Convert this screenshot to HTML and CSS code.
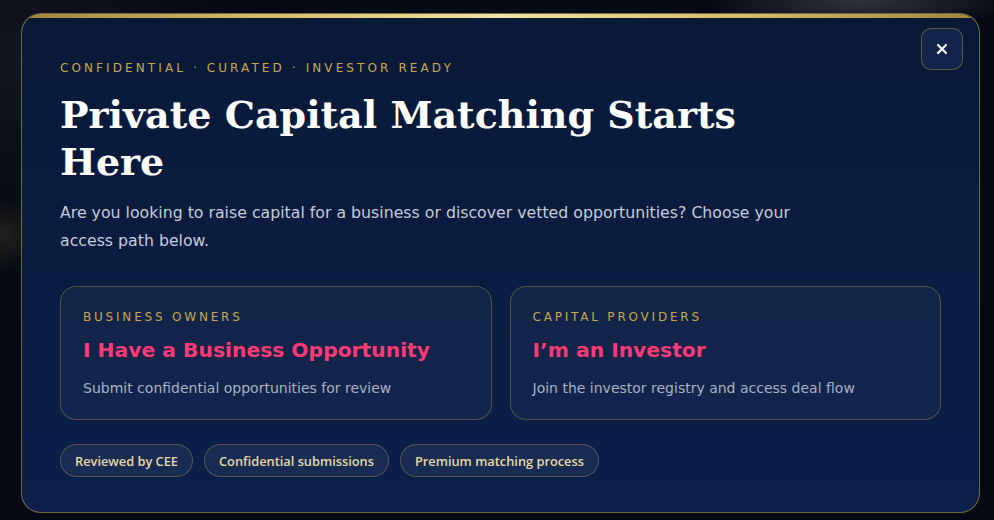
FILE: index.html
```html
<!DOCTYPE html>
<html lang="en">
<head>
<meta charset="utf-8">
<title>Private Capital Matching</title>
<link rel="stylesheet" href="styles.css">
</head>
<body>
<div class="backdrop">
  <div class="modal">
    <div class="modal-bar"></div>
    <button class="close" aria-label="Close">
      <svg width="12" height="12" viewBox="0 0 12 12"><path d="M2 2L10 10M10 2L2 10" stroke="#ffffff" stroke-width="2.2" stroke-linecap="round"/></svg>
    </button>
    <div class="modal-body">
      <p class="eyebrow">Confidential · Curated · Investor Ready</p>
      <h1 class="title">Private Capital Matching Starts Here</h1>
      <p class="lead">Are you looking to raise capital for a business or discover vetted opportunities? Choose your access path below.</p>
      <div class="cards">
        <a class="card" href="#">
          <span class="card-label">Business Owners</span>
          <span class="card-title">I Have a Business Opportunity</span>
          <span class="card-desc">Submit confidential opportunities for review</span>
        </a>
        <a class="card" href="#">
          <span class="card-label">Capital Providers</span>
          <span class="card-title">I’m an Investor</span>
          <span class="card-desc">Join the investor registry and access deal flow</span>
        </a>
      </div>
      <div class="pills">
        <span class="pill">Reviewed by CEE</span>
        <span class="pill">Confidential submissions</span>
        <span class="pill">Premium matching process</span>
      </div>
    </div>
  </div>
</div>
</body>
</html>
```

FILE: styles.css
```css
* { box-sizing: border-box; }
html, body { margin: 0; padding: 0; }
body {
  width: 994px;
  height: 520px;
  overflow: hidden;
  background: #050a14;
  font-family: "DejaVu Sans", "Open Sans", sans-serif;
}
.backdrop {
  width: 994px;
  height: 520px;
  padding: 13px 0 0 21px;
  background:
    radial-gradient(ellipse 220px 40px at 860px 2px, rgba(120,125,135,0.35), transparent 70%),
    radial-gradient(ellipse 60px 50px at 0px 235px, rgba(90,75,40,0.35), transparent 80%),
    radial-gradient(ellipse 300px 200px at 0px 60px, rgba(30,35,45,0.5), transparent 80%),
    #050a14;
}
.modal {
  position: relative;
  width: 959px;
  height: 500px;
  border: 1px solid rgba(201,169,74,0.55);
  border-radius: 20px;
  overflow: hidden;
  background: linear-gradient(180deg, #081936 0%, #0b1f4a 100%);
}
.modal-bar {
  height: 4px;
  background: linear-gradient(90deg, #a1843a 0%, #d9bc62 25%, #f3e2a2 50%, #d9bc62 75%, #a1843a 100%);
}
.close {
  position: absolute;
  top: 14px;
  right: 16px;
  width: 42px;
  height: 42px;
  border-radius: 10px;
  border: 1px solid rgba(201,169,74,0.4);
  background: #12244a;
  display: flex;
  align-items: center;
  justify-content: center;
  padding: 0;
}
.modal-body {
  padding: 42px 38px 0 38px;
}
.eyebrow {
  margin: 0;
  font-size: 12px;
  line-height: 16px;
  letter-spacing: 3.1px;
  text-transform: uppercase;
  color: #c9a94a;
}
.title {
  margin: 15px 0 0;
  max-width: 720px;
  font-family: "DejaVu Serif", "Liberation Serif", serif;
  font-weight: 700;
  font-size: 38px;
  line-height: 47px;
  color: #ffffff;
}
.lead {
  margin: 14px 0 0;
  max-width: 760px;
  font-size: 15.75px;
  line-height: 28px;
  color: #c6ccda;
}
.cards {
  display: grid;
  grid-template-columns: 1fr 1fr;
  gap: 18px;
  margin-top: 31px;
}
.card {
  display: flex;
  flex-direction: column;
  height: 134px;
  padding: 22px 22px 0;
  border: 1px solid rgba(201,169,74,0.35);
  border-radius: 16px;
  background: rgba(255,255,255,0.035);
  text-decoration: none;
}
.card-label {
  font-size: 12px;
  line-height: 16px;
  letter-spacing: 2.8px;
  text-transform: uppercase;
  color: #c9a94a;
}
.card-title {
  margin-top: 11px;
  font-size: 20.3px;
  line-height: 28px;
  font-weight: 700;
  color: #ff3b77;
}
.card-desc {
  margin-top: 14px;
  font-size: 14px;
  line-height: 20px;
  color: #aab2c4;
}
.pills {
  display: flex;
  gap: 11px;
  margin-top: 24px;
}
.pill {
  height: 33px;
  display: flex;
  align-items: center;
  padding: 0 14px;
  border-radius: 17px;
  border: 1px solid rgba(201,169,74,0.35);
  background: rgba(255,255,255,0.06);
  font-family: "Open Sans", "DejaVu Sans", sans-serif;
  font-size: 12.8px;
  font-weight: 600;
  color: #e8d9aa;
}
```
